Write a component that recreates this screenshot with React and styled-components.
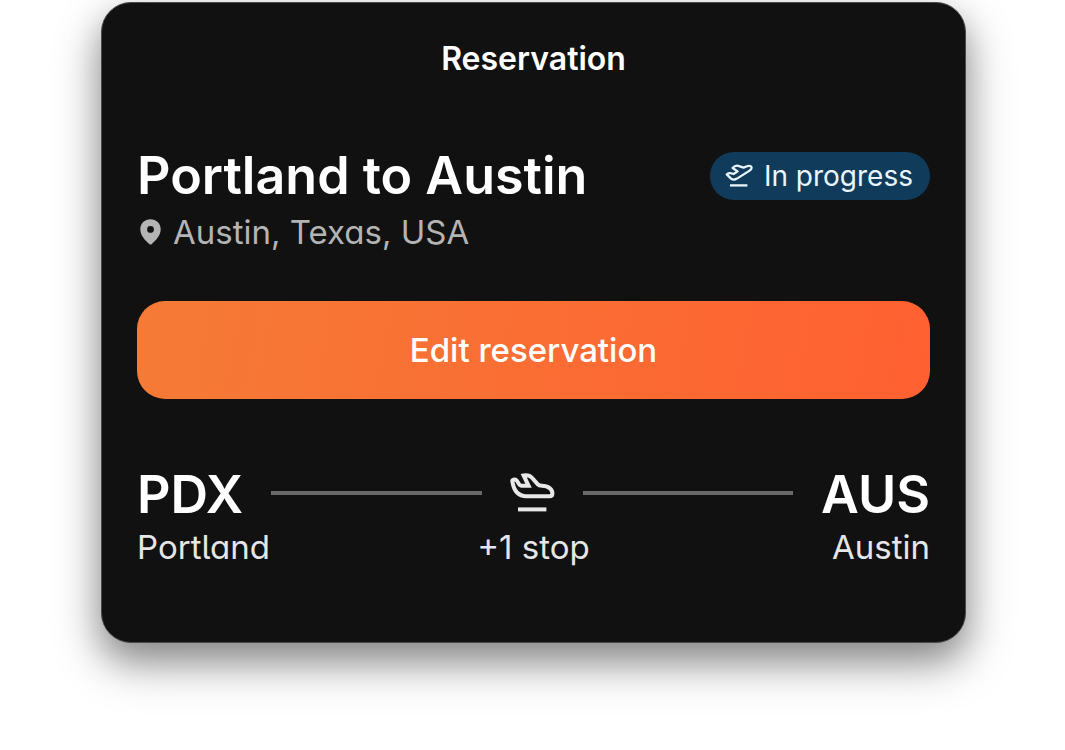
import styled, { createGlobalStyle } from "styled-components";

const GlobalStyle = createGlobalStyle`
  * {
    box-sizing: border-box;
  }

  body {
    margin: 0;
    background-color: #ffffff;
    font-family: Inter, "Liberation Sans", sans-serif;
  }
`;

const Page = styled.main`
  padding: 2px 99px 108px 101px;
`;

const Card = styled.article`
  padding: 36px 35px 74px;
  border: 1px solid #4a4c4c;
  border-radius: 30px;
  background-color: #111111;
  box-shadow: 0 20px 50px rgba(0, 0, 0, 0.3), 0 16px 32px rgba(0, 0, 0, 0.26);
  color: #ffffff;
`;

const Header = styled.h1`
  margin: 0 0 71px;
  font-size: 32px;
  font-weight: 600;
  line-height: 40px;
  text-align: center;
`;

const TitleRow = styled.div`
  display: flex;
  align-items: center;
  justify-content: space-between;
`;

const Title = styled.h2`
  margin: 0;
  font-size: 52px;
  font-weight: 600;
  line-height: 52px;
`;

const Badge = styled.span`
  display: flex;
  align-items: center;
  gap: 11px;
  padding: 4px 17px 4px 15px;
  border-radius: 24px;
  background-color: #113b5b;
  color: #eaf6ff;
  font-size: 28px;
  line-height: 40px;
`;

const Place = styled.p`
  display: flex;
  align-items: center;
  gap: 12px;
  margin: 8px 0 47px;
  padding-left: 3px;
  color: #b4b4b4;
  font-size: 33px;
  font-weight: 400;
  font-feature-settings: "cv11";
  line-height: 44px;
`;

const EditBtn = styled.button`
  display: block;
  width: 100%;
  padding: 28px;
  border: 0;
  border-radius: 28px;
  background: linear-gradient(100deg, #f57b36, #ff6031);
  color: #ffffff;
  font-family: inherit;
  font-size: 33px;
  font-weight: 500;
  line-height: 42px;
`;

const Route = styled.div`
  display: flex;
  align-items: center;
  justify-content: space-between;
  gap: 28px;
  margin-top: 66px;
`;

const Code = styled.strong`
  padding-top: 4px;
  font-size: 52px;
  font-weight: 600;
  line-height: 52px;
`;

const Line = styled.span`
  flex: 1;
  height: 4px;
  background-color: #6a6a6a;
`;

const Labels = styled.div`
  display: grid;
  grid-template-columns: 1fr auto 1fr;
  margin-top: 5px;
  color: #e6e6e6;
  font-size: 33px;
  font-weight: 400;
  font-feature-settings: "cv05", "cv11";
  line-height: 42px;
`;

const Label = styled.span`
  text-align: ${({ $align }) => $align || "left"};
`;

function TakeoffIcon() {
  return (
    <svg width="28" height="24" viewBox="0 0 28 24" fill="none" stroke="currentColor" strokeWidth="2.3" aria-hidden="true">
      <path
        d="M1.8 10.4 C2.8 9.2 4 8.8 5.4 9.2 L8.6 10 12.6 7.4 7.6 4 C9 2.4 11.4 1.4 13.2 1.8 L18.6 3.6 22 2.2 C24.4 1.2 26.6 2.2 26.6 3.8 C26.6 5 26 5.8 24.6 6.6 L12 14.6 C10 15.8 7.6 15.8 6 14.6 Z"
        strokeLinejoin="round"
      />
      <path d="M5 21.4H22.4" />
    </svg>
  );
}

function LandingIcon() {
  return (
    <svg width="45" height="40" viewBox="0 0 45 40" fill="none" stroke="#e8e8e8" strokeWidth="4" aria-hidden="true">
      <path d="M2.4 8.6 C1.8 6.8 3.8 6 5.6 6.6 C8 7.4 8.2 12.6 11.4 12.8 H18.6 L13.6 2.4 C17 1.8 20 2.4 22 4.8 L27.8 11.4 C28.8 12.6 30 12.8 32 12.8 C38.6 12.8 42.4 16.6 42.4 20.4 C42.4 22.4 41.4 23.2 39.6 23.2 H16.4 C7.4 23.2 3.8 17.4 2.4 8.6 Z" />
      <path d="M8 36.4H36.4" />
    </svg>
  );
}

function PinIcon() {
  return (
    <svg width="21" height="26" viewBox="0 0 21 26" fill="currentColor" aria-hidden="true">
      <path
        fillRule="evenodd"
        d="M10.5 0.3C4.7 0.3 0.3 4.6 0.3 10.2C0.3 16.4 5.2 21.4 9.2 24.9Q10.5 25.9 11.8 24.9C15.8 21.4 20.7 16.4 20.7 10.2C20.7 4.6 16.3 0.3 10.5 0.3ZM10.5 7A3.4 3.4 0 1 1 10.5 13.8A3.4 3.4 0 1 1 10.5 7Z"
      />
    </svg>
  );
}

function Flight({ from, to, stops }) {
  return (
    <section>
      <Route>
        <Code>{from.code}</Code>
        <Line />
        <LandingIcon />
        <Line />
        <Code>{to.code}</Code>
      </Route>
      <Labels>
        <Label>{from.city}</Label>
        <Label $align="center">{stops}</Label>
        <Label $align="right">{to.city}</Label>
      </Labels>
    </section>
  );
}

function App() {
  return (
    <Page>
      <GlobalStyle />
      <Card>
        <Header>Reservation</Header>
        <TitleRow>
          <Title>Portland to Austin</Title>
          <Badge>
            <TakeoffIcon />
            In progress
          </Badge>
        </TitleRow>
        <Place>
          <PinIcon />
          Austin, Texas, USA
        </Place>
        <EditBtn type="button">Edit reservation</EditBtn>
        <Flight
          from={{ code: "PDX", city: "Portland" }}
          to={{ code: "AUS", city: "Austin" }}
          stops="+1 stop"
        />
      </Card>
    </Page>
  );
}

export default App;
